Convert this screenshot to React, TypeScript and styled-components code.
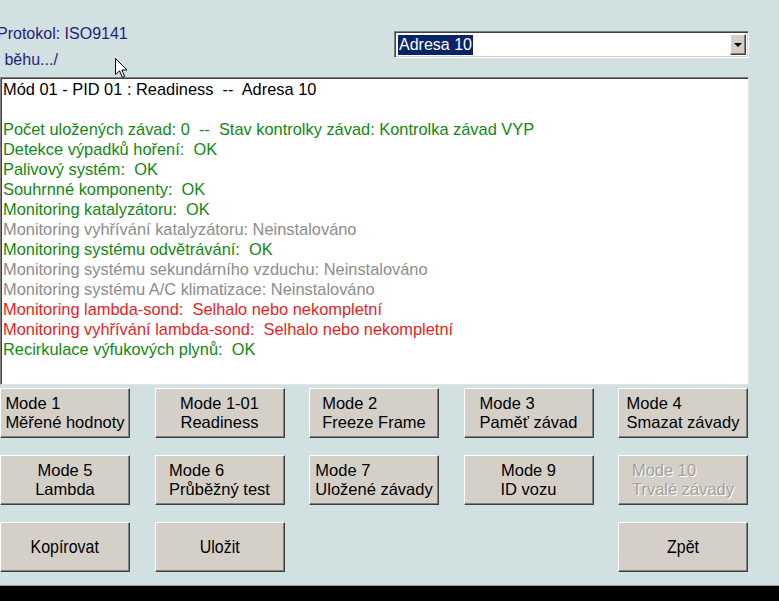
import styled, { createGlobalStyle } from "styled-components";

type LineTone = "head" | "ok" | "off" | "bad" | "blank";
type TextAlign = "left" | "center";

interface ModeButton {
  top: string;
  bottom: string;
  align: TextAlign;
  disabled?: boolean;
}

const MODE_BUTTONS: ModeButton[] = [
  { top: "Mode 1", bottom: "Měřené hodnoty", align: "left" },
  { top: "Mode 1-01", bottom: "Readiness", align: "center" },
  { top: "Mode 2", bottom: "Freeze Frame", align: "left" },
  { top: "Mode 3", bottom: "Paměť závad", align: "left" },
  { top: "Mode 4", bottom: "Smazat závady", align: "left" },
  { top: "Mode 5", bottom: "Lambda", align: "center" },
  { top: "Mode 6", bottom: "Průběžný test", align: "left" },
  { top: "Mode 7", bottom: "Uložené závady", align: "left" },
  { top: "Mode 9", bottom: "ID vozu", align: "center" },
  { top: "Mode 10", bottom: "Trvalé závady", align: "left", disabled: true },
];

const REPORT: { text: string; tone: LineTone }[] = [
  { text: "Mód 01 - PID 01 : Readiness  --  Adresa 10", tone: "head" },
  { text: "", tone: "blank" },
  { text: "Počet uložených závad: 0  --  Stav kontrolky závad: Kontrolka závad VYP", tone: "ok" },
  { text: "Detekce výpadků hoření:  OK", tone: "ok" },
  { text: "Palivový systém:  OK", tone: "ok" },
  { text: "Souhrnné komponenty:  OK", tone: "ok" },
  { text: "Monitoring katalyzátoru:  OK", tone: "ok" },
  { text: "Monitoring vyhřívání katalyzátoru: Neinstalováno", tone: "off" },
  { text: "Monitoring systému odvětrávání:  OK", tone: "ok" },
  { text: "Monitoring systému sekundárního vzduchu: Neinstalováno", tone: "off" },
  { text: "Monitoring systému A/C klimatizace: Neinstalováno", tone: "off" },
  { text: "Monitoring lambda-sond:  Selhalo nebo nekompletní", tone: "bad" },
  { text: "Monitoring vyhřívání lambda-sond:  Selhalo nebo nekompletní", tone: "bad" },
  { text: "Recirkulace výfukových plynů:  OK", tone: "ok" },
];

const TONE_COLORS: Record<LineTone, string> = {
  head: "#000000",
  ok: "#0f8a0f",
  off: "#8c8c8c",
  bad: "#ec1c1c",
  blank: "#000000",
};

const GlobalStyle = createGlobalStyle`
  html, body {
    margin: 0;
    padding: 0;
    background: #d1e0e0;
  }
  body {
    font-family: "Liberation Sans", Arial, sans-serif;
    overflow: hidden;
  }
  * { box-sizing: border-box; }
`;

const Screen = styled.div`
  position: relative;
  width: 779px;
  height: 601px;
  background: #d1e0e0;
  overflow: hidden;
  display: flex;
  flex-direction: column;
`;

const Header = styled.div`
  display: flex;
  justify-content: space-between;
  height: 77px;
  padding-right: 30px;
`;

const StatusColumn = styled.div`
  display: flex;
  flex-direction: column;
  gap: 6px;
  padding-top: 24px;
  color: #1e1e80;
  font-size: 16px;
  line-height: 20px;
  white-space: nowrap;
`;

const StatusLine = styled.div<{ $shift: number }>`
  margin-left: ${({ $shift }) => $shift}px;
`;

const Select = styled.div`
  display: flex;
  align-items: center;
  width: 355px;
  height: 27px;
  margin-top: 31px;
  padding: 2px;
  background: #ffffff;
  border: 1px solid;
  border-color: #808080 #ffffff #ffffff #808080;
  box-shadow: inset 1px 1px 0 #404040, inset -1px -1px 0 #d4d0c8;
`;

const SelectValue = styled.div`
  flex: 1;
  font-size: 16px;
  line-height: 21px;
  padding-left: 1px;
`;

const Highlight = styled.span`
  background: #0a246a;
  color: #ffffff;
  padding: 1px 1px 2px;
`;

const DropButton = styled.div`
  display: flex;
  align-items: center;
  justify-content: center;
  width: 16px;
  height: 21px;
  background: #d4d0c8;
  border: 1px solid;
  border-color: #ffffff #404040 #404040 #ffffff;
  box-shadow: inset -1px -1px 0 #808080;
`;

const Arrow = styled.div`
  width: 0;
  height: 0;
  border-left: 4px solid transparent;
  border-right: 4px solid transparent;
  border-top: 4px solid #000000;
`;

const Report = styled.div`
  width: 749px;
  height: 308px;
  padding: 1px 1px;
  background: #ffffff;
  border: 1px solid;
  border-color: #808080 #e4e4e4 #e4e4e4 #808080;
  box-shadow: inset 1px 1px 0 #404040;
  font-size: 16.4px;
  line-height: 20px;
  white-space: pre;
  overflow: hidden;
`;

const ReportLine = styled.div<{ $tone: LineTone }>`
  height: 20px;
  padding-left: 1px;
  color: ${({ $tone }) => TONE_COLORS[$tone]};
`;

const ButtonGrid = styled.div`
  display: grid;
  grid-template-columns: repeat(5, 130px);
  grid-auto-rows: 50px;
  column-gap: 24.5px;
  row-gap: 17px;
  margin-top: 3px;
`;

const Button = styled.div<{ $col?: number }>`
  grid-column: ${({ $col }) => ($col ? `${$col}` : "auto")};
  display: flex;
  align-items: center;
  justify-content: center;
  background: #d4d0c8;
  border: 1px solid;
  border-color: #ffffff #404040 #404040 #ffffff;
  box-shadow: inset -1px -1px 0 #808080;
  font-size: 16.5px;
  color: #000000;
`;

const Caption = styled.div<{ $align: TextAlign; $disabled?: boolean }>`
  display: inline-block;
  text-align: ${({ $align }) => $align};
  line-height: 19px;
  white-space: nowrap;
  color: ${({ $disabled }) => ($disabled ? "#a4a09a" : "#000000")};
  text-shadow: ${({ $disabled }) => ($disabled ? "1px 1px 0 #ffffff" : "none")};
`;

const NarrowCaption = styled.div`
  font-size: 19px;
  line-height: 22px;
  white-space: nowrap;
  transform: scaleX(0.84);
`;

const Footer = styled.div`
  margin-top: auto;
  height: 16px;
  background: #000000;
  border-top: 1px solid #9a9a9a;
`;

const Pointer = styled.svg`
  position: absolute;
  left: 115px;
  top: 58px;
`;

export default function App() {
  return (
    <Screen>
      <GlobalStyle />
      <Header>
        <StatusColumn>
          <StatusLine $shift={-3}>Protokol: ISO9141</StatusLine>
          <StatusLine $shift={-8}>v běhu.../</StatusLine>
        </StatusColumn>
        <Select>
          <SelectValue>
            <Highlight>Adresa 10</Highlight>
          </SelectValue>
          <DropButton>
            <Arrow />
          </DropButton>
        </Select>
      </Header>

      <Report>
        {REPORT.map((line, i) => (
          <ReportLine key={i} $tone={line.tone}>
            {line.text}
          </ReportLine>
        ))}
      </Report>

      <ButtonGrid>
        {MODE_BUTTONS.map((b) => (
          <Button key={b.top}>
            <Caption $align={b.align} $disabled={b.disabled}>
              {b.top}
              <br />
              {b.bottom}
            </Caption>
          </Button>
        ))}
        <Button $col={1}>
          <NarrowCaption>Kopírovat</NarrowCaption>
        </Button>
        <Button $col={2}>
          <NarrowCaption>Uložit</NarrowCaption>
        </Button>
        <Button $col={5}>
          <NarrowCaption>Zpět</NarrowCaption>
        </Button>
      </ButtonGrid>

      <Footer />

      <Pointer width="13" height="21" viewBox="0 0 13 21">
        <path
          d="M0.5 0.5 L0.5 16.5 L4.5 12.8 L7.3 19.3 L9.6 18.3 L6.9 12 L12 12 Z"
          fill="#ffffff"
          stroke="#000000"
          strokeWidth="1"
          strokeLinejoin="miter"
        />
      </Pointer>
    </Screen>
  );
}
